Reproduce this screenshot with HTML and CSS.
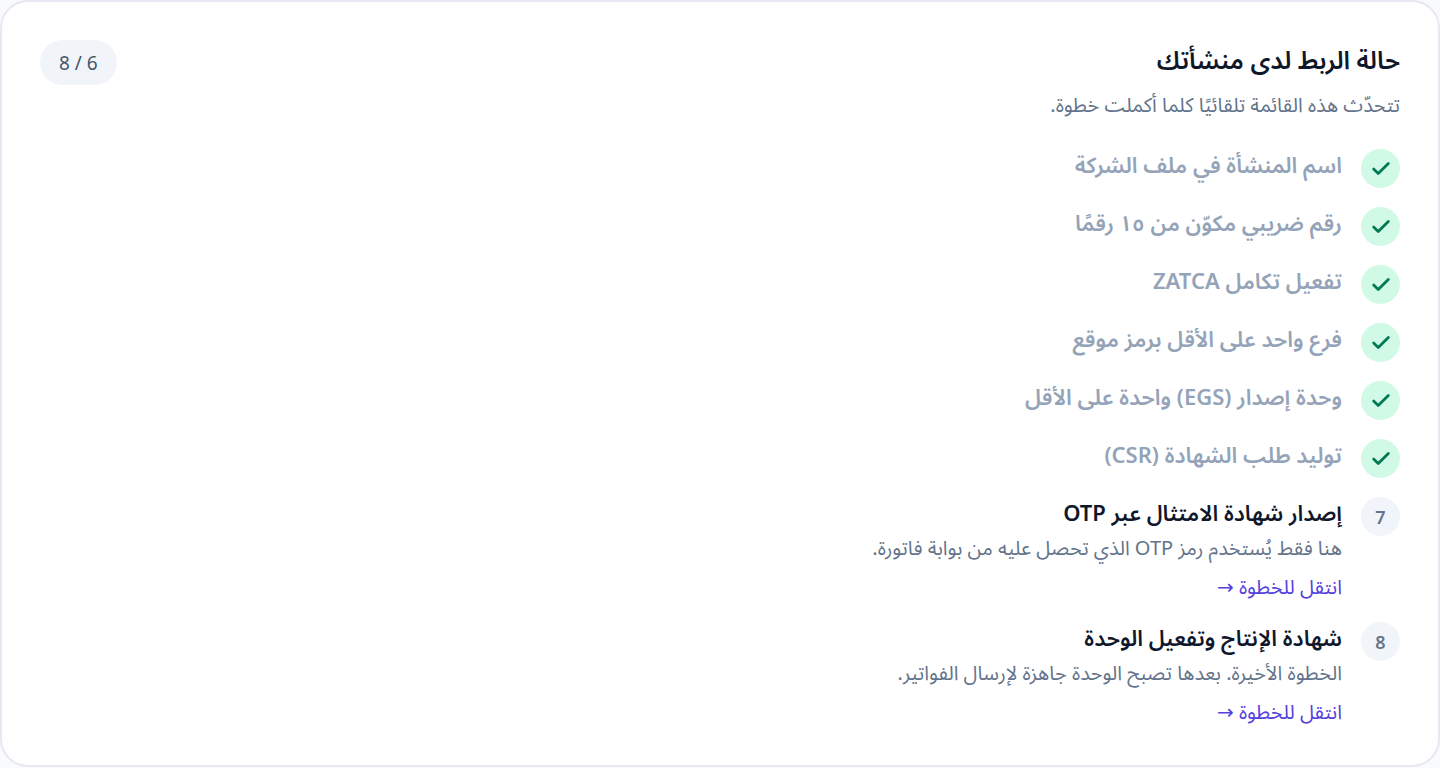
FILE: index.html
```html
<!DOCTYPE html>
<html lang="ar" dir="rtl">
<head>
<meta charset="utf-8">
<title>حالة الربط لدى منشأتك</title>
<link rel="stylesheet" href="styles.css">
</head>
<body>
<main class="card">
  <header class="head">
    <div>
      <h1 class="title">حالة الربط لدى منشأتك</h1>
      <p class="subtitle">تتحدّث هذه القائمة تلقائيًا كلما أكملت خطوة.</p>
    </div>
    <span class="count">6 / 8</span>
  </header>
  <ol class="steps">
    <li class="step done"><span class="mark"><svg class="check" viewBox="0 0 24 24"><path d="M20 6 9 17l-5-5"/></svg></span><p class="name">اسم المنشأة في ملف الشركة</p></li>
    <li class="step done"><span class="mark"><svg class="check" viewBox="0 0 24 24"><path d="M20 6 9 17l-5-5"/></svg></span><p class="name">رقم ضريبي مكوّن من ١٥ رقمًا</p></li>
    <li class="step done"><span class="mark"><svg class="check" viewBox="0 0 24 24"><path d="M20 6 9 17l-5-5"/></svg></span><p class="name">تفعيل تكامل ZATCA</p></li>
    <li class="step done"><span class="mark"><svg class="check" viewBox="0 0 24 24"><path d="M20 6 9 17l-5-5"/></svg></span><p class="name">فرع واحد على الأقل برمز موقع</p></li>
    <li class="step done"><span class="mark"><svg class="check" viewBox="0 0 24 24"><path d="M20 6 9 17l-5-5"/></svg></span><p class="name">وحدة إصدار (EGS) واحدة على الأقل</p></li>
    <li class="step done"><span class="mark"><svg class="check" viewBox="0 0 24 24"><path d="M20 6 9 17l-5-5"/></svg></span><p class="name">توليد طلب الشهادة (CSR)</p></li>
    <li class="step"><span class="mark">7</span><div><p class="name">إصدار شهادة الامتثال عبر OTP</p><p class="note">هنا فقط يُستخدم رمز OTP الذي تحصل عليه من بوابة فاتورة.</p><a class="go" href="#otp">انتقل للخطوة →</a></div></li>
    <li class="step"><span class="mark">8</span><div><p class="name">شهادة الإنتاج وتفعيل الوحدة</p><p class="note">الخطوة الأخيرة. بعدها تصبح الوحدة جاهزة لإرسال الفواتير.</p><a class="go" href="#production">انتقل للخطوة →</a></div></li>
  </ol>
</main>
</body>
</html>
```
FILE: styles.css
```css
* { box-sizing: border-box; }
body { margin: 0; background: #f8fafc; font-family: "Noto Sans", "Noto Sans Arabic", "DejaVu Sans", sans-serif; }
h1, p, ol { margin: 0; padding: 0; }
.card { background: #fff; border: 2px solid #e6e8f2; border-radius: 28px; padding: 38px 38px 37px; }
.head { display: flex; justify-content: space-between; align-items: flex-start; }
.title { font-size: 25px; line-height: 38px; font-weight: 600; color: #0f172a; }
.subtitle { margin-top: 11px; font-size: 20px; line-height: 32px; color: #64748b; }
.count { padding: 7px 19px 5px; border-radius: 24px; background: #f1f5f9; color: #475569; font-size: 19px; line-height: 33px; }
.steps { list-style: none; display: grid; gap: 15px; margin-top: 24px; }
.step { display: flex; align-items: flex-start; gap: 19px; }
.mark { flex: none; display: grid; place-items: center; width: 39px; height: 39px; margin-top: 4px; border-radius: 50%; background: #f1f5f9; color: #64748b; font-size: 18px; font-weight: 600; }
.name { font-size: 22px; line-height: 39px; font-weight: 600; color: #0f172a; }
.note { font-size: 20px; line-height: 32px; color: #64748b; }
.go { display: block; width: fit-content; margin-top: 6px; font-size: 20px; line-height: 33px; color: #5442dc; text-decoration: none; }
.done .mark { background: #d0fae5; color: #007a55; }
.done .name { color: #94a3b8; }
.check { width: 22px; height: 22px; fill: none; stroke: currentColor; stroke-width: 3; stroke-linecap: round; stroke-linejoin: round; }
```
